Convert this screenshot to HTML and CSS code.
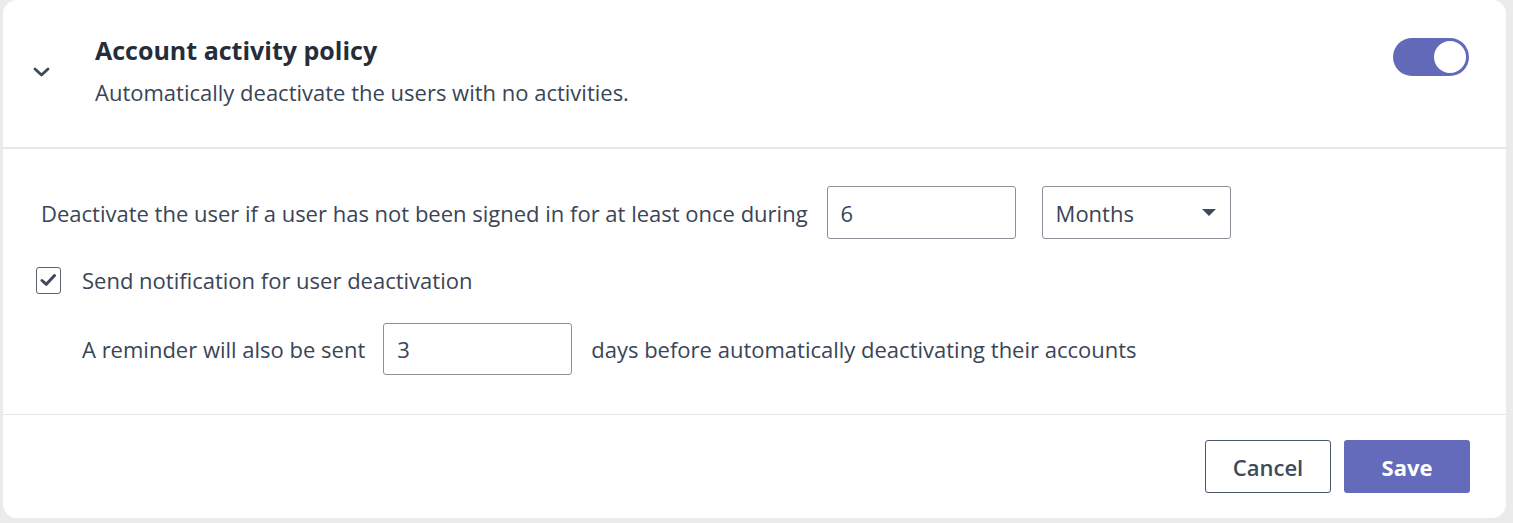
FILE: index.html
```html
<!DOCTYPE html>
<html>
<head>
<meta charset="utf-8">
<link rel="stylesheet" href="styles.css">
</head>
<body>
<div class="card">
  <div class="header">
    <div class="chev">
      <svg width="17" height="10" viewBox="0 0 17 10"><path d="M2 2 L8.5 8 L15 2" fill="none" stroke="#3d4a5c" stroke-width="2.8" stroke-linecap="round" stroke-linejoin="round"/></svg>
    </div>
    <div class="titles">
      <div class="title">Account activity policy</div>
      <div class="subtitle">Automatically deactivate the users with no activities.</div>
    </div>
    <div class="toggle"><span class="knob"></span></div>
  </div>
  <div class="body">
    <div class="row">
      <span class="label">Deactivate the user if a user has not been signed in for at least once during</span>
      <div class="input">6</div>
      <div class="select"><span>Months</span><span class="caret"></span></div>
    </div>
    <div class="row check-row">
      <span class="checkbox">
        <svg width="17" height="14" viewBox="0 0 17 14"><path d="M2 7.5 L6.3 11.3 L14.5 2.5" fill="none" stroke="#3d4a5c" stroke-width="3" stroke-linecap="round" stroke-linejoin="round"/></svg>
      </span>
      <span class="label">Send notification for user deactivation</span>
    </div>
    <div class="row reminder">
      <span class="label">A reminder will also be sent</span>
      <div class="input small">3</div>
      <span class="label">days before automatically deactivating their accounts</span>
    </div>
  </div>
  <div class="footer">
    <button class="btn cancel">Cancel</button>
    <button class="btn save">Save</button>
  </div>
</div>
</body>
</html>
```
FILE: styles.css
```css
html, body {
  margin: 0;
  padding: 0;
  background: #ebebeb;
}
body {
  font-family: "Open Sans", "Noto Sans", sans-serif;
  color: #3a4556;
  width: 1513px;
  height: 523px;
  overflow: hidden;
}
.card {
  margin-left: 3px;
  width: 1503px;
  height: 518px;
  background: #ffffff;
  border-radius: 14px;
  box-sizing: border-box;
  display: flex;
  flex-direction: column;
}
.header {
  height: 114px;
  padding: 33px 37px 0 30px;
  border-bottom: 2px solid #e6e7e9;
  display: flex;
  align-items: flex-start;
}
.chev {
  width: 17px;
  height: 10px;
  display: flex;
  margin-top: 34px;
}
.titles {
  margin-left: 45px;
  flex: 1;
}
.title {
  font-size: 25px;
  font-weight: 700;
  color: #252d3a;
  line-height: 34px;
}
.subtitle {
  font-size: 22px;
  line-height: 30px;
  margin-top: 10px;
  color: #3a4556;
}
.toggle {
  width: 76px;
  height: 38px;
  border-radius: 19px;
  background: #6369b9;
  display: flex;
  align-items: center;
  justify-content: flex-end;
  padding-right: 3px;
  box-sizing: border-box;
  margin-top: 5px;
}
.knob {
  width: 32px;
  height: 32px;
  border-radius: 50%;
  background: #ffffff;
}
.body {
  padding: 37px 36px 39px 38px;
  display: flex;
  flex-direction: column;
  gap: 26px;
  border-bottom: 1px solid #e6e7e9;
}
.row {
  display: flex;
  align-items: center;
  font-size: 22px;
}
.label {
  white-space: nowrap;
  line-height: 30px;
}
.input, .select {
  width: 189px;
  height: 53px;
  box-sizing: border-box;
  border: 1px solid #8c9099;
  border-radius: 3px;
  display: flex;
  align-items: center;
  padding: 0 13px;
  font-size: 22px;
  color: #3a4556;
}
.row .input {
  margin-left: 19px;
}
.select {
  margin-left: 26px;
  justify-content: space-between;
}
.caret {
  width: 0;
  height: 0;
  border-left: 7px solid transparent;
  border-right: 7px solid transparent;
  border-top: 7px solid #3d4a5c;
  margin-right: 1px;
}
.check-row {
  margin-left: -5px;
}
.checkbox {
  width: 25px;
  height: 27px;
  box-sizing: border-box;
  border: 1px solid #5a6270;
  border-radius: 3px;
  display: flex;
  align-items: center;
  justify-content: center;
  margin-right: 21px;
}
.reminder {
  padding-left: 41px;
  margin-top: 2px;
}
.reminder .input.small {
  height: 52px;
  margin-left: 18px;
  margin-right: 19px;
}
.footer {
  flex: 1;
  display: flex;
  justify-content: flex-end;
  align-items: flex-start;
  gap: 13px;
  padding: 25px 36px 0 0;
}
.btn {
  width: 126px;
  height: 53px;
  border-radius: 3px;
  font-family: "Open Sans", "Noto Sans", sans-serif;
  font-size: 22px;
  font-weight: 600;
  cursor: pointer;
}
.cancel {
  background: #ffffff;
  border: 1px solid #4a5568;
  color: #3d4a5c;
}
.save {
  background: #646bba;
  border: none;
  color: #ffffff;
  font-weight: 700;
}
```
